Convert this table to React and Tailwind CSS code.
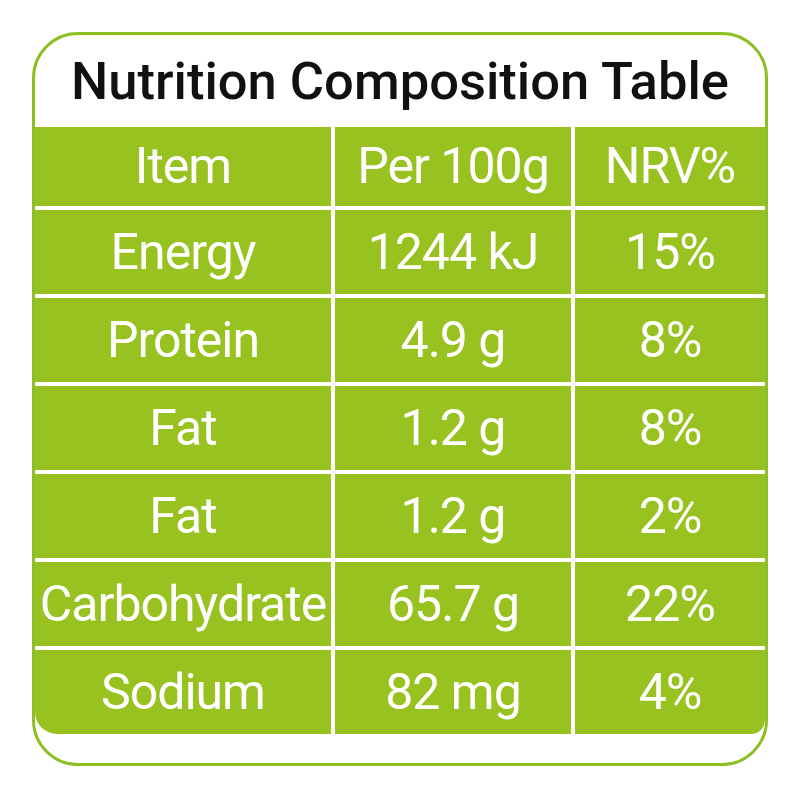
import React from 'react';

const rows = [
  ['Energy', '1244 kJ', '15%'],
  ['Protein', '4.9 g', '8%'],
  ['Fat', '1.2 g', '8%'],
  ['Fat', '1.2 g', '2%'],
  ['Carbohydrate', '65.7 g', '22%'],
  ['Sodium', '82 mg', '4%'],
];

const Cell = ({ children, header, className = '' }) => (
  <div
    className={`flex items-center justify-center bg-[#97c21f] text-white text-[50px] tracking-[-1px] whitespace-nowrap ${
      header ? 'h-[79px]' : 'h-[84px]'
    } ${className}`}
  >
    {children}
  </div>
);

const App = () => {
  return (
    <div className="w-[800px] h-[800px] bg-white p-8 font-['Roboto',_sans-serif]">
      <div className="h-[734px] border-[3px] border-[#8bbf22] rounded-[46px] overflow-hidden bg-white flex flex-col">
        {/* Title */}
        <div className="h-[92px] flex items-center justify-center">
          <h1 className="text-[52.5px] font-medium text-[#111] leading-none">
            Nutrition Composition Table
          </h1>
        </div>

        {/* Table */}
        <div className="grid grid-cols-[296px_236px_190px] gap-[4px] bg-white">
          <Cell header>Item</Cell>
          <Cell header>Per 100g</Cell>
          <Cell header>NRV%</Cell>
          {rows.map((r, i) => {
            const last = i === rows.length - 1;
            return (
              <React.Fragment key={i}>
                <Cell className={last ? 'rounded-bl-[22px]' : ''}>{r[0]}</Cell>
                <Cell>{r[1]}</Cell>
                <Cell className={last ? 'rounded-br-[14px]' : ''}>{r[2]}</Cell>
              </React.Fragment>
            );
          })}
        </div>

        <div className="flex-1" />
      </div>
    </div>
  );
};

export default App;
